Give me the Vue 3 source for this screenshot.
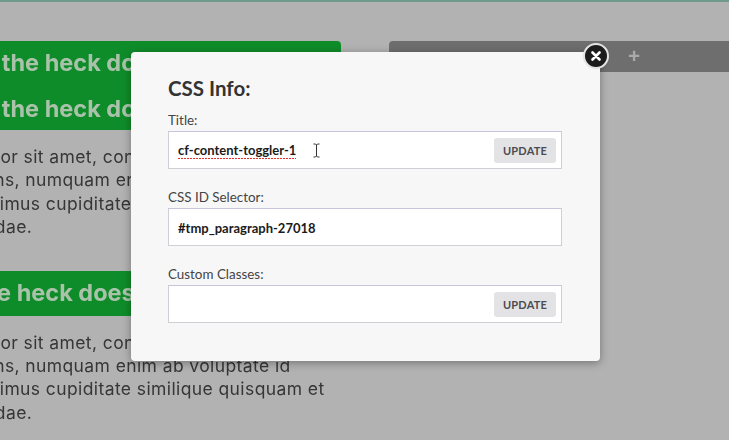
<script setup>
import { ref } from 'vue';

const fields = ref([
  { label: 'Title:', value: 'cf-content-toggler-1', update: true, misspelt: true, caret: true },
  { label: 'CSS ID Selector:', value: '#tmp_paragraph-27018', update: false },
  { label: 'Custom Classes:', value: '', update: true },
]);
</script>

<template>
  <div class="page">
    <div class="columns">
      <div class="left">
        <div class="green first">
          <div class="head">What the heck does this do?</div>
          <div class="head">What the heck does this do?</div>
        </div>
        <p class="copy">
          Lorem ipsum dolor sit amet, consectetur<br />
          Dolorum repellens, numquam enim ab<br />
          Tempora dignissimus cupiditate<br />
          Neque repudiandae.
        </p>
        <div class="green second">
          <div class="head shifted">What the heck does this do?</div>
        </div>
        <p class="copy">
          Lorem ipsum dolor sit amet, consectetur<br />
          Dolorum repellens, numquam enim ab voluptate id<br />
          Tempora dignissimus cupiditate similique quisquam et<br />
          Neque repudiandae.
        </p>
      </div>
      <div class="right">
        <div class="tab-bar"><span class="plus">+</span></div>
      </div>
    </div>

    <div class="modal">
      <button class="close" type="button" aria-label="Close">
        <svg width="10" height="10" viewBox="0 0 10 10">
          <path d="M1.5 1.5 L8.5 8.5 M8.5 1.5 L1.5 8.5" stroke="#fff" stroke-width="2.6" stroke-linecap="round" />
        </svg>
      </button>
      <h2>CSS Info:</h2>
      <div v-for="field in fields" :key="field.label" class="field">
        <label>{{ field.label }}</label>
        <div class="input">
          <span class="value" :class="{ misspelt: field.misspelt }">{{ field.value }}</span>
          <svg v-if="field.caret" class="caret" width="9" height="15" viewBox="0 0 9 15">
            <path d="M1.5 1 H3.5 L4.5 2 L5.5 1 H7.5 M4.5 2 V13 M1.5 14 H3.5 L4.5 13 L5.5 14 H7.5" fill="none" stroke="#333" stroke-width="1" />
          </svg>
          <button v-if="field.update" class="update" type="button">UPDATE</button>
        </div>
      </div>
    </div>
  </div>
</template>

<style scoped>
.page {
  position: relative;
  width: 729px;
  height: 440px;
  overflow: hidden;
  background: #b2b2b2;
  border-top: 2px solid #6f9a8c;
  box-sizing: border-box;
  font-family: Inter, "Liberation Sans", sans-serif;
}

.columns {
  display: flex;
  gap: 48px;
  padding-top: 39px;
  margin-left: -143px;
  filter: blur(0.4px);
}

.left {
  width: 484px;
  flex: none;
}

.right {
  flex: 1;
  min-width: 0;
}

.green {
  background: #0f8c2a;
  border-radius: 4px;
  padding-left: 78px;
}

.first {
  height: 89px;
  box-sizing: border-box;
  padding-top: 7px;
}

.second {
  height: 45px;
  box-sizing: border-box;
  margin-top: 32px;
  padding-top: 7px;
}

.head {
  font-size: 23.5px;
  font-weight: 700;
  line-height: 30px;
  padding-bottom: 16px;
  color: #aac2aa;
  white-space: nowrap;
}

.shifted {
  margin-left: -28px;
}

.copy {
  margin: 15px 0 0;
  font-size: 17.5px;
  letter-spacing: 0.4px;
  line-height: 23.4px;
  color: #363636;
  white-space: nowrap;
}

.tab-bar {
  height: 31px;
  background: #6e6e6e;
  border-radius: 4px 0 0 0;
  display: flex;
  align-items: center;
}

.plus {
  margin-left: 238px;
  padding-bottom: 3px;
  color: #a9a9a9;
  font-size: 21px;
  font-weight: 600;
  line-height: 28px;
}

.modal {
  position: absolute;
  left: 131px;
  top: 50px;
  width: 469px;
  height: 309px;
  box-sizing: border-box;
  padding: 24px 38px 0 37px;
  background: #f7f7f8;
  border-radius: 4px;
  box-shadow: 0 2px 8px rgba(0, 0, 0, 0.35);
  font-family: Lato, "Liberation Sans", sans-serif;
}

.close {
  position: absolute;
  top: -9px;
  right: -9px;
  width: 26px;
  height: 26px;
  padding: 0;
  border: 2px solid #e4e4e4;
  border-radius: 50%;
  background: #1c1c1c;
  display: flex;
  align-items: center;
  justify-content: center;
}

h2 {
  margin: 0 0 11px;
  font-size: 20.5px;
  line-height: 24px;
  font-weight: 700;
  color: #333;
}

.field {
  margin-bottom: 19px;
}

label {
  display: block;
  font-size: 13.4px;
  line-height: 18px;
  color: #444;
  margin-bottom: 2px;
}

.input {
  height: 38px;
  box-sizing: border-box;
  display: flex;
  align-items: center;
  padding: 0 5px 0 9px;
  background: #fff;
  border: 1px solid #cfcfd6;
  border-top-color: #c5c5dc;
}

.value {
  margin-top: 2px;
  font-size: 13px;
  font-weight: 700;
  color: #1b1b1b;
}

.misspelt {
  line-height: 15px;
  padding-bottom: 1px;
  background: repeating-linear-gradient(90deg, #e0302f 0 2px, transparent 2px 3px) left bottom / 100% 1px no-repeat;
}

.caret {
  margin-left: 16px;
}

.update {
  margin-left: auto;
  width: 62px;
  height: 25px;
  padding: 0;
  border: none;
  border-radius: 3px;
  background: #e3e3e6;
  color: #4b4b50;
  font-family: inherit;
  font-size: 11px;
  font-weight: 700;
  letter-spacing: 0.2px;
}
</style>

<style>
body {
  margin: 0;
}
</style>
